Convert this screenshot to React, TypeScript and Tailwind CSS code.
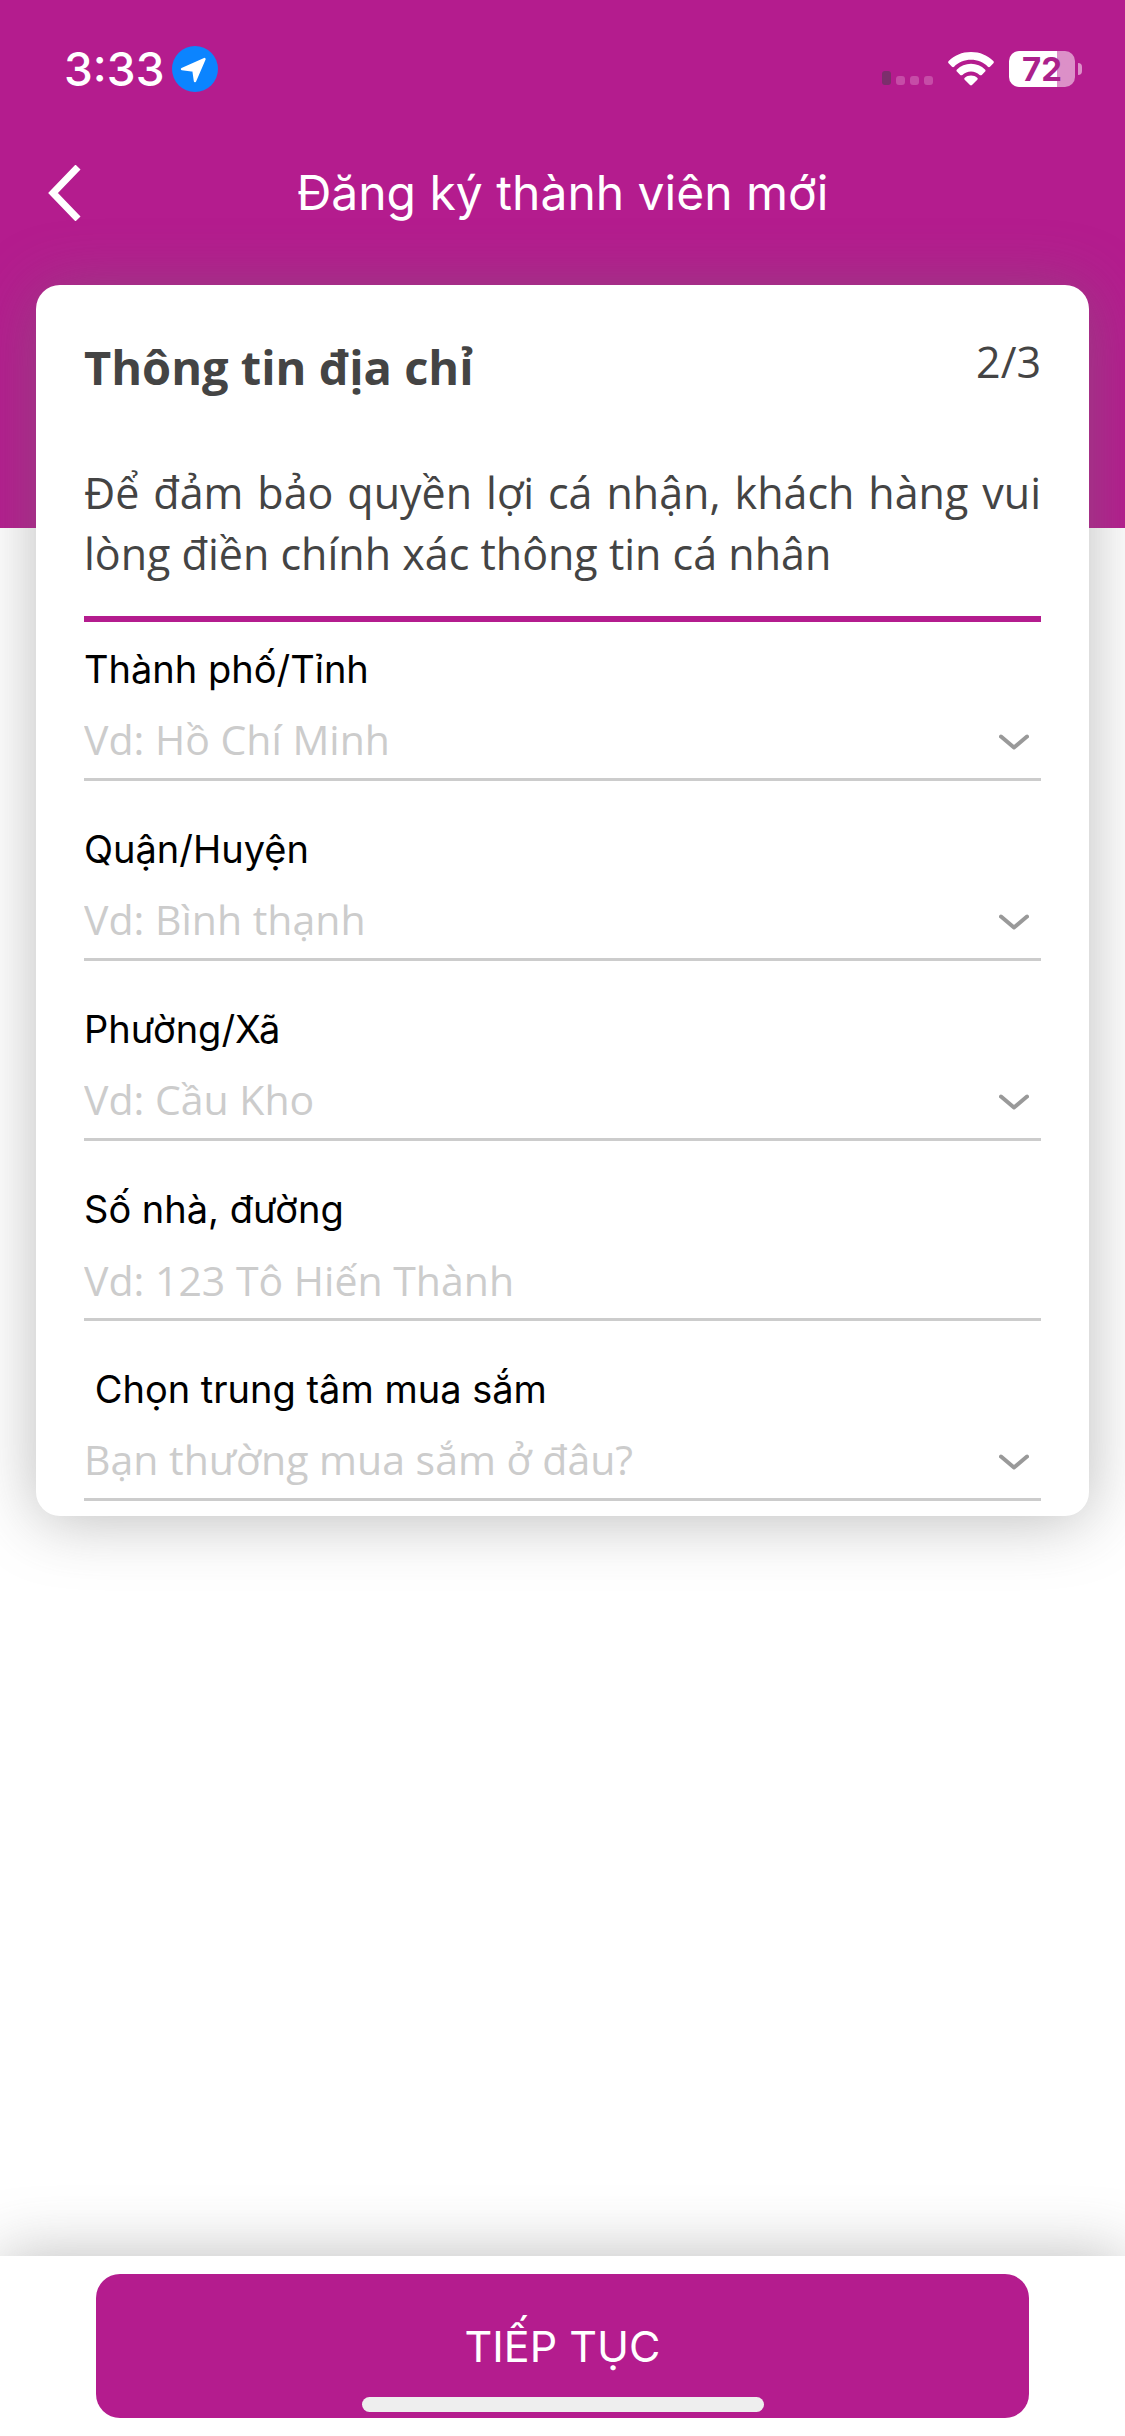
import React from 'react';

interface Field {
  id: string;
  label: string;
  placeholder: string;
  type: 'select' | 'text';
}

const fields: Field[] = [
  { id: 'city', label: 'Thành phố/Tỉnh', placeholder: 'Vd: Hồ Chí Minh', type: 'select' },
  { id: 'district', label: 'Quận/Huyện', placeholder: 'Vd: Bình thạnh', type: 'select' },
  { id: 'ward', label: 'Phường/Xã', placeholder: 'Vd: Cầu Kho', type: 'select' },
  { id: 'street', label: 'Số nhà, đường', placeholder: 'Vd: 123 Tô Hiến Thành', type: 'text' },
  { id: 'mall', label: '\u00a0Chọn trung tâm mua sắm', placeholder: 'Bạn thường mua sắm ở đâu?', type: 'select' },
];

const StatusBar: React.FC = () => (
  <div className="flex items-center justify-between pt-[46px] pl-[64px] pr-[43px]">
    <div className="flex items-center gap-2">
      <span className="text-[46px] leading-[46px] font-medium">3:33</span>
      <svg className="w-[46px] h-[46px]" viewBox="0 0 46 46" aria-hidden="true">
        <circle cx="23" cy="23" r="23" fill="#0b84ff" />
        <path d="M32.5 13 L10 23 L21.5 24.5 L23 35 Z" fill="#fff" stroke="#fff" strokeWidth="2.4" strokeLinejoin="round" />
      </svg>
    </div>
    <div className="flex items-center gap-[15px]">
      <svg className="w-[51px] h-[36px]" viewBox="0 0 51 36" aria-hidden="true">
        <rect x="0" y="20" width="9" height="14" rx="3" fill="#7c2e6c" />
        <rect x="14" y="25" width="9" height="9" rx="3" fill="#c64ca7" />
        <rect x="28" y="25" width="9" height="9" rx="3" fill="#c64ca7" />
        <rect x="42" y="25" width="9" height="9" rx="3" fill="#c64ca7" />
      </svg>
      <svg className="w-[46px] h-[36px]" viewBox="0 0 46 36" fill="#fff" aria-hidden="true">
        <path d="M23 1 C14 1 6.300 4.400 0.700 10 C0 10.700 0 11.600 0.600 12.300 L4 15.700 C4.600 16.300 5.500 16.300 6.100 15.700 C10.500 11.400 16.400 8.800 23 8.800 C29.600 8.800 35.500 11.400 39.900 15.700 C40.500 16.300 41.400 16.300 42 15.700 L45.400 12.300 C46 11.600 46 10.700 45.300 10 C39.700 4.400 32 1 23 1 Z" />
        <path d="M23 12.800 C17.600 12.800 12.600 14.900 9 18.400 C8.300 19.100 8.300 20 8.900 20.600 L12.200 23.900 C12.900 24.500 13.700 24.500 14.400 23.900 C16.700 21.700 19.700 20.400 23 20.400 C26.300 20.400 29.300 21.700 31.600 23.900 C32.300 24.500 33.100 24.500 33.800 23.900 L37.100 20.600 C37.700 20 37.700 19.100 37 18.400 C33.400 14.900 28.400 12.800 23 12.800 Z" />
        <path d="M23 24.400 C20.600 24.400 18.400 25.300 16.800 26.700 C16.100 27.300 16.100 28.100 16.700 28.700 L22 34 C22.600 34.600 23.400 34.600 24 34 L29.300 28.700 C29.900 28.100 29.900 27.300 29.200 26.700 C27.600 25.300 25.400 24.400 23 24.400 Z" />
      </svg>
      <div className="flex items-center gap-[3px]">
        <div className="flex items-center justify-center w-[66px] h-[36px] rounded-[10px] bg-linear-to-r from-white from-73% to-[#dc90c8] to-73%">
          <span className="text-[33px] leading-[36px] font-bold text-[#ab218b]">72</span>
        </div>
        <div className="w-1 h-3 rounded-r-full bg-[#dc90c8]" />
      </div>
    </div>
  </div>
);

const FormField: React.FC<{ field: Field }> = ({ field }) => (
  <div>
    <label htmlFor={field.id} className="block text-[38px] leading-[48px] pb-3 text-black">
      {field.label}
    </label>
    <div className="grid items-center border-b-3 border-[#cccccc] font-['Open_Sans','Noto_Sans',sans-serif] text-[41px]">
      {field.type === 'select' ? (
        <>
          <select
            id={field.id}
            defaultValue=""
            className="col-start-1 row-start-1 w-full h-[73px] pb-[3px] appearance-none bg-transparent text-[#cccccc] outline-none"
          >
            <option value="">{field.placeholder}</option>
          </select>
          <svg
            className="col-start-1 row-start-1 justify-self-end mr-3 w-[30px] h-4 pointer-events-none"
            viewBox="0 0 30 16"
            fill="none"
            stroke="#999999"
            strokeWidth="4"
            strokeLinecap="round"
            strokeLinejoin="round"
            aria-hidden="true"
          >
            <path d="M2 2.500 L15 13.500 L28 2.500" />
          </svg>
        </>
      ) : (
        <input
          id={field.id}
          type="text"
          placeholder={field.placeholder}
          className="w-full h-[73px] pb-[3px] bg-transparent text-[#444444] placeholder:text-[#cccccc] outline-none"
        />
      )}
    </div>
  </div>
);

const App: React.FC = () => {
  return (
    <div className="flex flex-col min-h-screen bg-white font-['Inter','Noto_Sans',sans-serif]">
      {/* Header */}
      <header className="bg-[#b41c8e] text-white pb-[243px]">
        <StatusBar />
        <div className="grid grid-cols-[96px_1fr_96px] items-center pt-[44px] pb-[35px]">
          <button type="button" aria-label="Quay lại" className="pl-12 h-[114px]">
            <svg
              className="w-[34px] h-[56px]"
              viewBox="0 0 34 56"
              fill="none"
              stroke="#fff"
              strokeWidth="7"
              aria-hidden="true"
            >
              <path d="M30 2 L5 28 L30 54" />
            </svg>
          </button>
          <h1 className="text-center text-[48px] leading-[60px]">Đăng ký thành viên mới</h1>
        </div>
      </header>

      {/* Address card */}
      <main className="px-9 -mt-[243px]">
        <form id="address-form" className="rounded-3xl bg-white px-12 pt-[46px] pb-[15px] shadow-[0_4px_64px_rgba(113,113,113,0.47)]">
          <div className="font-['Open_Sans','Noto_Sans',sans-serif] text-[#444444]">
            <div className="flex items-start justify-between">
              <h2 className="text-[47px] leading-[72px] font-bold">Thông tin địa chỉ</h2>
              <span className="text-[43px] leading-[61px]">2/3</span>
            </div>
            <p className="mt-[59px] pb-8 text-[43px] leading-[61px] text-justify border-b-6 border-[#b41c8e]">
              Để đảm bảo quyền lợi cá nhận, khách hàng vui lòng điền chính xác thông tin cá nhân
            </p>
          </div>
          <div className="flex flex-col gap-11 pt-[23px]">
            {fields.map((field) => (
              <FormField key={field.id} field={field} />
            ))}
          </div>
        </form>
      </main>

      {/* Bottom action */}
      <footer className="relative mt-auto px-24 py-[18px] bg-white shadow-[0_0_64px_rgba(113,113,113,0.47)]">
        <button
          type="submit"
          form="address-form"
          className="w-full h-36 rounded-3xl bg-[#b41c8e] text-white text-[43px]"
        >
          TIẾP TỤC
        </button>
        <div className="absolute inset-x-0 bottom-6 mx-auto w-[402px] h-[15px] rounded-full bg-[#eeeeee]" />
      </footer>
    </div>
  );
};

export default App;
